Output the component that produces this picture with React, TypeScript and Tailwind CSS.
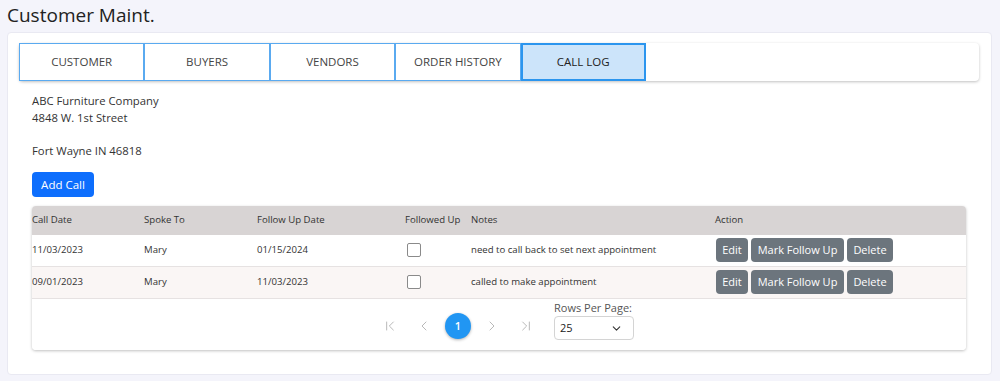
import { ChevronFirst, ChevronLast, ChevronLeft, ChevronRight, ChevronDown } from "lucide-react";

const TABS = ["CUSTOMER", "BUYERS", "VENDORS", "ORDER HISTORY", "CALL LOG"];

const CALLS = [
  { date: "11/03/2023", who: "Mary", follow: "01/15/2024", notes: "need to call back to set next appointment" },
  { date: "09/01/2023", who: "Mary", follow: "11/03/2023", notes: "called to make appointment" },
];

const COLS = "grid grid-cols-[112px_113px_148px_66px_244px_1fr]";

export default function App() {
  return (
    <div className="w-[1000px] h-[381px] bg-[#f4f4fb] text-[#333] overflow-hidden" style={{ fontFamily: "'Open Sans', sans-serif" }}>
      <h1 className="h-[32px] pl-[7px] pt-[1px] text-[19px] leading-[28px] text-[#222]">Customer Maint.</h1>

      <div className="ml-[7px] w-[985px] h-[343px] bg-white rounded border border-[#e9e9f2] pl-[11px] pt-[10px]">
        <div className="w-[960px] h-[38px] flex rounded-sm bg-white shadow-[0_1px_3px_rgba(0,0,0,0.25)]">
          {TABS.map((t, i) => (
            <div
              key={t}
              className={`w-[125.4px] h-full flex items-center justify-center text-[11.5px] ${
                i === 4 ? "bg-[#cce4fa] border-2 border-[#2b95ee] text-[#222]" : "border border-[#5aaaf0] text-[#444]"
              }`}
            >
              {t}
            </div>
          ))}
        </div>

        <div className="pl-[13px] pt-[12px]">
          <div className="text-[11.3px] leading-[16.7px] text-[#333]">
            <p>ABC Furniture Company</p>
            <p>4848 W. 1st Street</p>
            <p>&nbsp;</p>
            <p>Fort Wayne IN 46818</p>
          </div>

          <button className="mt-[12px] h-[25px] w-[62px] rounded bg-[#0d6efd] text-white text-[11.5px]">Add Call</button>

          <div className="mt-[9px] w-[934px] rounded shadow-[0_1px_3px_rgba(0,0,0,0.25)] overflow-hidden text-[9.6px] text-[#333]">
            <div className={`${COLS} h-[29px] items-center bg-[#d8d4d4]`}>
              <div>Call Date</div>
              <div>Spoke To</div>
              <div>Follow Up Date</div>
              <div>Followed Up</div>
              <div>Notes</div>
              <div>Action</div>
            </div>
            {CALLS.map((c, i) => (
              <div key={c.date} className={`${COLS} h-[32px] items-center border-b border-[#e6e2e2] ${i === 1 ? "bg-[#faf6f5]" : "bg-white"}`}>
                <div>{c.date}</div>
                <div>{c.who}</div>
                <div>{c.follow}</div>
                <div className="pl-[2px]">
                  <div className="w-[14px] h-[14px] border border-[#8a8a8a] rounded-[2px] bg-white" />
                </div>
                <div>{c.notes}</div>
                <div className="flex gap-[3px] pl-[1px]">
                  <button className="h-[24px] w-[32px] rounded bg-[#6c757d] text-white text-[11px]">Edit</button>
                  <button className="h-[24px] w-[93px] rounded bg-[#6c757d] text-white text-[11px]">Mark Follow Up</button>
                  <button className="h-[24px] w-[46px] rounded bg-[#6c757d] text-white text-[11px]">Delete</button>
                </div>
              </div>
            ))}
            <div className="h-[51px] flex items-center pl-[341px] bg-white">
              <div className="flex items-center text-[#b9b9b9] pt-[3px]">
                <div className="w-[34px] flex justify-center"><ChevronFirst size={16} strokeWidth={1.5} /></div>
                <div className="w-[34px] flex justify-center"><ChevronLeft size={16} strokeWidth={1.5} /></div>
                <div className="w-[34px] flex justify-center">
                  <div className="w-[26px] h-[26px] rounded-full bg-[#2196f3] text-white text-[11px] font-semibold flex items-center justify-center shadow-[0_1px_3px_rgba(0,0,0,0.3)]">1</div>
                </div>
                <div className="w-[34px] flex justify-center"><ChevronRight size={16} strokeWidth={1.5} /></div>
                <div className="w-[34px] flex justify-center"><ChevronLast size={16} strokeWidth={1.5} /></div>
              </div>
              <div className="ml-[11px] flex flex-col -mt-[7px]">
                <span className="text-[11px] leading-[14px] text-[#555]">Rows Per Page:</span>
                <div className="mt-[1px] w-[80px] h-[24px] border border-[#d4d4d4] rounded flex items-center justify-between px-[5px] text-[11px] text-[#222]">
                  <span>25</span>
                  <ChevronDown size={13} strokeWidth={2} className="mr-[5px] text-[#333]" />
                </div>
              </div>
            </div>
          </div>
        </div>
      </div>
    </div>
  );
}
